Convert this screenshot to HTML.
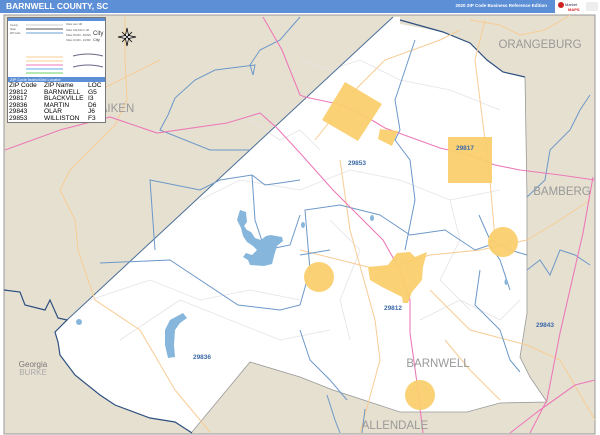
<!DOCTYPE html>
<html><head><meta charset="utf-8"><style>
html,body{margin:0;padding:0;width:600px;height:435px;overflow:hidden;background:#fff;font-family:"Liberation Sans",sans-serif}
#hdr{position:absolute;left:0;top:0;width:555px;height:13px;background:#5d8fd6}
#hdr .t{position:absolute;left:6px;top:1px;color:#fff;font-weight:bold;font-size:8.5px}
#hdr .r{position:absolute;right:8px;top:3px;color:#fff;font-weight:bold;font-size:4.5px}
#logo{position:absolute;left:555px;top:0;width:45px;height:13px;background:#fff}
svg{position:absolute;left:0;top:0}
#leg{position:absolute;left:7px;top:17px;width:99px;height:106px;background:#fff;border:1px solid #777;box-sizing:border-box}
#leg .tb{position:absolute;left:0;top:0;width:100%;height:3px;background:#5d8fd6}
#leg .ib{position:absolute;left:0;top:59px;width:100%;height:5px;background:#5d8fd6;color:#fff;font-size:4px;line-height:5px;padding-left:2px;box-sizing:border-box}
#leg .row{position:absolute;left:1px;font-size:6.6px;line-height:6.6px;white-space:nowrap}
#leg .row span{position:absolute;top:0}
</style></head><body>
<div id="hdr"><div class="t">BARNWELL COUNTY, SC</div><div class="r">2020 ZIP Code Business Reference Edition</div></div>
<div id="logo"><svg width="45" height="13" viewBox="0 0 45 13"><circle cx="6" cy="5" r="3" fill="#c22"/><text x="10" y="6" font-size="4" fill="#335">Market</text><text x="13" y="11" font-size="4" fill="#d22" font-weight="bold">MAPS</text><rect x="31" y="2" width="12" height="9" fill="#eee"/></svg></div>
<svg width="600" height="435" viewBox="0 0 600 435" style="top:0">
<rect x="4" y="15" width="591" height="419" fill="#e6e0d1"/>
<rect x="4" y="15" width="591" height="419" fill="none" stroke="#999" stroke-width="1"/>
<polygon fill="#fff" points="67,320 393,17 400,17 400,24 443,32 470,43 487,60 503,72 525,77 527,197 527,313 520,357 530,377 547,402 500,403 467,412 400,412 333,390 300,377 250,362 192,432 175,422 150,418 115,405 100,395 75,375 60,355 58,342 55,332"/>
<g fill="none" stroke="#e4e4e8" stroke-width="0.8">
<polyline points="90,300 150,280 200,300 250,290 300,300"/>
<polyline points="120,340 180,300 230,320 280,340 330,330"/>
<polyline points="200,200 240,180 300,190 350,170 400,180 450,200 500,190"/>
<polyline points="300,60 330,70 360,60 400,80 450,90 500,110"/>
<polyline points="420,320 460,300 500,320 520,300"/>
<polyline points="250,120 280,140 300,130 320,150"/>
<polyline points="330,220 360,250 340,300 350,340"/>
<polyline points="450,200 460,240 440,280 470,310"/>
</g>
<polyline fill="none" stroke="#4a6e98" stroke-width="1" points="67,320 393,17"/>
<polyline fill="none" stroke="#2d5080" stroke-width="1.2" points="400,20 443,32 470,43 487,60 503,72 525,77"/>
<polyline fill="none" stroke="#2d5080" stroke-width="1.2" points="4,290 20,292 25,305 45,310 50,300 58,318 67,320 55,332 58,342 60,355 75,375 100,395 115,405 150,418 175,422 192,433"/>
<polyline fill="none" stroke="#999" stroke-width="0.8" points="525,77 527,197 527,313 520,357 530,377 547,402 500,403 467,412 400,412 333,390 300,377 250,362 192,432"/>
<g fill="none" stroke="#f7cc94" stroke-width="1">
<polyline points="125,17 125,60 127,100 115,125 70,170 60,190 75,220 78,250 95,300 140,330 175,390 210,432"/>
<polyline points="160,60 100,90 50,120"/>
<polyline points="300,250 340,260 380,270 430,255 480,250 527,240 560,220 590,200"/>
<polyline points="340,160 350,230 375,320 380,360 360,433"/>
<polyline points="430,290 470,330 527,345 560,360 595,420"/>
<polyline points="570,15 545,30 520,35 500,25 470,20"/>
<polyline points="485,20 475,60 480,100 490,180 495,240"/>
<polyline points="445,340 470,370 500,400"/>
<polyline points="315,140 355,90 385,60 440,40 460,30"/>
</g>
<g fill="none" stroke="#6c98c8" stroke-width="1">
<polyline points="300,17 280,40 260,50 250,65 253,75 255,65 215,70 195,80 175,98 168,115 160,130 210,150 250,150"/>
<polyline points="415,40 405,70 395,100 400,130 395,140 410,160 415,200 405,250"/>
<polyline points="300,180 280,183 265,185 252,175 220,180 200,190 150,180 155,250"/>
<polyline points="252,175 255,220 265,250 290,245 300,215"/>
<polyline points="100,263 170,260 238,305 280,310 300,305 310,270 305,210 340,205 380,215 410,235 445,230 475,250 490,245 500,260 510,290"/>
<polyline points="300,255 330,250"/>
<polyline points="300,330 310,360 330,380 347,400"/>
<polyline points="479,215 490,240 510,250 527,255"/>
<polyline points="480,270 475,305 500,330 510,360 520,372"/>
<polyline points="527,197 545,180 550,150 570,130 580,110 590,95"/>
<polyline points="527,270 540,260 550,275 560,250 575,255 590,265"/>
<polyline points="327,395 335,420 340,433"/>
<polyline points="365,409 362,433"/>
</g>
<g fill="none" stroke="#ec7ab8" stroke-width="1.1">
<polyline points="263,17 282,50 300,95 305,97 338,104 360,113 385,128 440,148 470,155 495,165 520,170 560,175 595,180"/>
<polyline points="5,150 60,130 110,117 157,133 227,123 260,113 277,128 300,153 333,190 383,240 400,270 410,300 410,333 417,383 423,433"/>
<polyline points="593,177 583,233 560,333 547,400 530,433"/>
<polyline points="510,433 540,410 575,385 595,380"/>
</g>
<g fill="#fbcf6e" opacity="0.95">
<polygon points="345,82 382,104 358,141 322,120"/>
<polygon points="380,129 398,131 392,146 378,139"/>
<rect x="448" y="137" width="44" height="46"/>
<circle cx="503" cy="242" r="15"/>
<circle cx="319" cy="277" r="15"/>
<circle cx="420" cy="395" r="15"/>
<polygon points="368,267 388,265 397,253 410,252 415,257 427,252 423,267 422,280 412,292 408,303 403,303 402,297 382,287 370,280"/>
</g>
<g fill="#86b6dc">
<path d="M240,210 L246,212 L247,222 L244,226 L247,230 L251,232 L255,238 L261,240 L266,236 L271,235 L276,236 L282,237 L283,241 L277,246 L274,256 L272,264 L264,266 L250,265 L248,260 L243,257 L246,253 L252,255 L257,250 L253,246 L247,242 L243,236 L241,228 L237,220 Z"/>
<path d="M183,313 L187,318 L180,323 L175,330 L174,345 L175,357 L168,358 L165,345 L165,330 L170,320 Z"/>
<ellipse cx="79" cy="322" rx="3" ry="3"/>
<ellipse cx="303" cy="225" rx="2" ry="3"/>
<ellipse cx="372" cy="218" rx="2" ry="3"/>
<ellipse cx="506" cy="282" rx="1.5" ry="3"/>
</g>
<g stroke="#000" stroke-width="0.8" fill="#000" transform="translate(127,37)">
<path d="M0,-9 L1.5,-1.5 L9,0 L1.5,1.5 L0,9 L-1.5,1.5 L-9,0 L-1.5,-1.5 Z" fill="#fff"/>
<path d="M-5,-5 L5,5 M5,-5 L-5,5"/>
</g>
<g font-family="Liberation Sans,sans-serif">
<g fill="#3d6aa8" font-size="6.5" font-weight="bold" text-anchor="middle">
<text x="357" y="165">29853</text><text x="465" y="150">29817</text><text x="393" y="310">29812</text>
<text x="545" y="327">29843</text><text x="202" y="359">29836</text>
</g>
<g fill="#999" font-size="11.5" text-anchor="middle">
<text x="438" y="367">BARNWELL</text><text x="395" y="429">ALLENDALE</text><text x="562" y="195">BAMBERG</text>
<text x="540" y="48">ORANGEBURG</text><text x="117" y="112">AIKEN</text>
</g>
<text x="33" y="367" font-size="8" fill="#777" text-anchor="middle">Georgia</text>
<text x="33" y="375" font-size="8" fill="#aaa" text-anchor="middle">BURKE</text>
</g>
</svg>
<div id="leg"><div class="tb"></div>
<svg width="97" height="58" style="left:0;top:3px">
<g stroke-width="1" fill="none">
<line x1="18" y1="4" x2="55" y2="4" stroke="#ccc"/>
<line x1="18" y1="8" x2="55" y2="8" stroke="#555"/>
<line x1="18" y1="12" x2="55" y2="12" stroke="#9cc0e0" stroke-width="1.5"/>
<line x1="18" y1="36" x2="55" y2="36" stroke="#f7cc94"/>
<line x1="18" y1="40" x2="55" y2="40" stroke="#f7cc94"/>
<line x1="18" y1="44" x2="55" y2="44" stroke="#ec7ab8"/>
<line x1="18" y1="48" x2="55" y2="48" stroke="#5ab0e8"/>
<line x1="18" y1="52" x2="55" y2="52" stroke="#6cd06c"/>
<path d="M65,35 Q80,31 95,35 M65,46 Q80,42 95,46" stroke="#668"/>
</g>
<g font-size="2.5" fill="#555"><text x="2" y="5">County</text><text x="2" y="9">State</text><text x="2" y="13">ZIP Code</text><text x="58" y="4">Cities over 1M</text><text x="58" y="10">Cities 100,000 to 1M</text><text x="58" y="15">Cities 25,000 - 99,999</text><text x="58" y="20">Cities 10,000 - 24,999</text></g>
<text x="85" y="14" font-size="6" fill="#333">City</text><text x="85" y="20" font-size="4" fill="#333">City</text>
</svg>
<div class="ib">ZIP Code Index/Grid Locator</div>
<div class="row" style="top:65px"><span style="left:0">ZIP Code</span><span style="left:35px">ZIP Name</span><span style="left:79px">LOC</span></div>
<div class="row" style="top:71.6px"><span style="left:0">29812</span><span style="left:35px">BARNWELL</span><span style="left:79px">G5</span></div>
<div class="row" style="top:78.2px"><span style="left:0">29817</span><span style="left:35px">BLACKVILLE</span><span style="left:79px">I3</span></div>
<div class="row" style="top:84.8px"><span style="left:0">29836</span><span style="left:35px">MARTIN</span><span style="left:79px">D6</span></div>
<div class="row" style="top:91.4px"><span style="left:0">29843</span><span style="left:35px">OLAR</span><span style="left:79px">J6</span></div>
<div class="row" style="top:98px"><span style="left:0">29853</span><span style="left:35px">WILLISTON</span><span style="left:79px">F3</span></div>
</div>
</body></html>
